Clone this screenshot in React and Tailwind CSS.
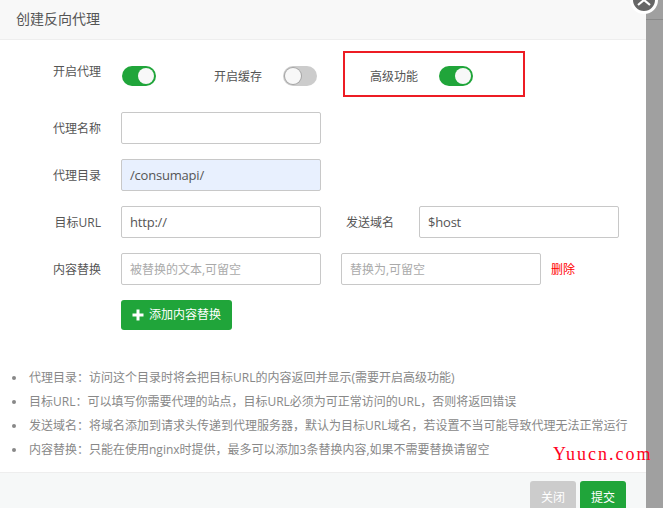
const font = { fontFamily: '"Open Sans", "Noto Sans CJK SC", sans-serif' }

function Toggle({ on }) {
  return (
    <div className={`w-[34px] h-[20px] rounded-full flex items-center p-[2px] ${on ? 'bg-[#20a53a] justify-end' : 'bg-[#cccccc] justify-start'}`}>
      <div className={`w-[16px] h-[16px] rounded-full bg-[#f8f8f8] ${on ? '' : 'shadow-[0_0_0_1px_#a6a6a6]'}`} />
    </div>
  )
}

function Field({ value, placeholder, className = '' }) {
  return (
    <div className={`w-[200px] h-[32px] shrink-0 rounded-[2px] border border-[#c8c8c8] pl-[8px] pt-[2px] flex items-center ${placeholder ? 'text-[12px] text-[#aaaaaa]' : 'text-[13px] tracking-[-0.2px] text-[#555555]'} ${className}`}>
      {value || placeholder}
    </div>
  )
}

function Label({ children }) {
  return <div className="w-[101px] pt-[2px] text-right text-[12px] text-[#555555] shrink-0">{children}</div>
}

export default function App() {
  const tips = [
    '代理目录：访问这个目录时将会把目标URL的内容返回并显示(需要开启高级功能)',
    '目标URL：可以填写你需要代理的站点，目标URL必须为可正常访问的URL，否则将返回错误',
    '发送域名：将域名添加到请求头传递到代理服务器，默认为目标URL域名，若设置不当可能导致代理无法正常运行',
    '内容替换：只能在使用nginx时提供，最多可以添加3条替换内容,如果不需要替换请留空',
  ]

  return (
    <div style={font} className="relative w-[663px] h-[508px] overflow-hidden flex bg-[#a0a0a0]">
      <div className="w-[646px] h-full bg-white flex flex-col">
        <div className="h-[40px] shrink-0 bg-[#f8f8f8] border-b border-[#eeeeee] pl-[16px] pb-[2px] flex items-center text-[14px] text-[#555555]">
          创建反向代理
        </div>

        <div className="flex-1">
          <div className="flex items-start h-[72px] pt-[26px]">
            <div className="w-[101px] -mt-[3px] text-right text-[12px] text-[#555555] shrink-0">开启代理</div>
            <div className="ml-[21px]"><Toggle on /></div>
            <div className="ml-[58px] text-[12px] text-[#555555] mt-[2px]">开启缓存</div>
            <div className="ml-[21px]"><Toggle /></div>
            <div className="ml-[53px] text-[12px] text-[#555555] mt-[2px]">高级功能</div>
            <div className="ml-[21px]"><Toggle on /></div>
          </div>

          <div className="flex items-center">
            <Label>代理名称</Label>
            <Field className="ml-[20px]" />
          </div>
          <div className="flex items-center mt-[15px]">
            <Label>代理目录</Label>
            <Field className="ml-[20px] bg-[#e8f0fe]" value="/consumapi/" />
          </div>
          <div className="flex items-center mt-[15px]">
            <Label>目标URL</Label>
            <Field className="ml-[20px]" value="http://" />
            <div className="ml-[25px] pt-[2px] w-[48px] text-[12px] text-[#555555] whitespace-nowrap">发送域名</div>
            <Field className="ml-[25px]" value="$host" />
          </div>
          <div className="flex items-center mt-[15px]">
            <Label>内容替换</Label>
            <Field className="ml-[20px]" placeholder="被替换的文本,可留空" />
            <Field className="ml-[20px]" placeholder="替换为,可留空" />
            <div className="ml-[10px] pt-[2px] text-[12px] text-[#ff0000]">删除</div>
          </div>
          <div className="mt-[15px] ml-[121px] w-[111px] h-[30px] rounded-[3px] bg-[#20a53a] text-white text-[12px] flex items-center pl-[11px]">
            <svg width="12" height="12" viewBox="0 0 12 12" className="mr-[5px]">
              <path d="M4.5 0.5h3v4h4v3h-4v4h-3v-4h-4v-3h4z" fill="#ffffff" />
            </svg>
            添加内容替换
          </div>

          <ul className="mt-[36px] pl-[12px]">
            {tips.map(t => (
              <li key={t} className="flex items-center h-[24px] text-[12px] text-[#888888] whitespace-nowrap">
                <span className="w-[4px] h-[4px] rounded-full bg-[#888888] mr-[13px] shrink-0" />
                {t}
              </li>
            ))}
          </ul>
        </div>

        <div className="h-[36px] shrink-0 bg-[#f6f8f8] border-t border-[#eeeeee] flex justify-end gap-[4px] pr-[20px] pt-[8px]">
          <div className="w-[46px] h-[34px] rounded-[3px] bg-[#cccccc] text-white text-[12px] flex items-center justify-center">关闭</div>
          <div className="w-[46px] h-[34px] rounded-[3px] bg-[#20a53a] text-white text-[12px] flex items-center justify-center">提交</div>
        </div>
      </div>

      <div className="absolute left-[646px] top-[19px] w-[17px] h-px bg-[#8a8a8a]" />

      {/* close button sits half outside the viewport */}
      <div className="absolute left-[630px] top-[-14px] w-[28px] h-[28px] rounded-full bg-[#666666] border-[3px] border-white" />
      <svg width="28" height="28" viewBox="0 0 28 28" className="absolute left-[630px] top-[-14px]">
        <path d="M8 9l12 10M20 9L8 19" stroke="#ffffff" strokeWidth="2.2" fill="none" />
      </svg>

      {/* red annotation box and watermark drawn over the screenshot */}
      <div className="absolute left-[343px] top-[51px] w-[182px] h-[46px] border-2 border-[#ed1c24]" />
      <div className="absolute left-[553px] top-[443px] text-[18px] leading-[22px] text-[#ff0022] tracking-[2px] whitespace-nowrap" style={{ fontFamily: '"Liberation Serif", serif' }}>
        Yuucn.com
      </div>
    </div>
  )
}
